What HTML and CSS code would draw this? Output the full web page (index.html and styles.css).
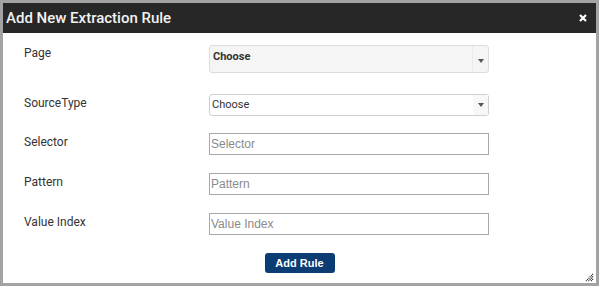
FILE: index.html
```html
<!DOCTYPE html>
<html lang="en">

<head>
    <meta charset="UTF-8">
    <title>Add New Extraction Rule</title>
    <link rel="stylesheet" href="styles.css">
</head>

<body>
    <!-- dialog window -->
    <div class="dialog">
        <div class="dialog-header">
            <span class="dialog-title">Add New Extraction Rule</span>
            <svg class="close-icon" width="8" height="8" viewBox="0 0 8 8">
                <path d="M1 1 L7 7 M7 1 L1 7" stroke="#fff" stroke-width="2.2" />
            </svg>
        </div>

        <div class="dialog-body">
            <div class="form-row row-page">
                <label class="form-label">Page</label>
                <div class="select select-page">
                    <span class="select-text">Choose</span>
                    <span class="select-arrow"><i class="caret"></i></span>
                </div>
            </div>
            <div class="form-row row-source">
                <label class="form-label">SourceType</label>
                <div class="select select-source">
                    <span class="select-text">Choose</span>
                    <span class="select-arrow"><i class="caret"></i></span>
                </div>
            </div>
            <div class="form-row">
                <label class="form-label">Selector</label>
                <input class="text-input" type="text" placeholder="Selector">
            </div>
            <div class="form-row">
                <label class="form-label">Pattern</label>
                <input class="text-input" type="text" placeholder="Pattern">
            </div>
            <div class="form-row">
                <label class="form-label">Value Index</label>
                <input class="text-input" type="text" placeholder="Value Index">
            </div>
            <div class="button-row">
                <button class="add-btn">Add Rule</button>
            </div>
        </div>

        <!-- resize grip -->
        <svg class="resize-grip" width="9" height="9" viewBox="0 0 9 9">
            <path d="M8 1 L1 8 M8 3.5 L3.5 8 M8 6 L6 8" stroke="#222" stroke-width="1.2" stroke-dasharray="1 0.8" />
        </svg>
    </div>
</body>

</html>
```

FILE: styles.css
```css
/* page and window frame */
body {
    margin: 0;
    height: 286px;
    padding: 3px 3px 3px 3px;
    box-sizing: border-box;
    background-color: #a3a3a3;
    font-family: Roboto, "Liberation Sans", Arial, sans-serif;
}

.dialog {
    position: relative;
    height: 100%;
    background-color: #fff;
    display: flex;
    flex-direction: column;
}

/* header bar */
.dialog-header {
    height: 30px;
    background-color: #272727;
    display: flex;
    align-items: center;
    justify-content: space-between;
    padding: 0 9px 0 3px;
}

.dialog-title {
    color: #f2f2f2;
    font-size: 15px;
    font-weight: 500;
    margin-top: -1px;
}

.close-icon {
    margin-top: -1px;
}

/* form */
.dialog-body {
    padding: 12px 0 0 21px;
}

.form-row {
    display: flex;
    align-items: flex-start;
    margin-bottom: 18px;
}

.row-page {
    margin-bottom: 21px;
}

.row-source {
    margin-bottom: 17px;
}

.form-label {
    width: 185px;
    font-size: 12px;
    color: #333;
    line-height: 16px;
    padding-top: 1px;
}

.row-page .form-label {
    padding-top: 0;
}

.select {
    width: 280px;
    box-sizing: border-box;
    display: flex;
    border: 1px solid #ddd;
    border-radius: 3px;
    color: #333;
}

.select-page {
    height: 28px;
    background-color: #f5f5f5;
    font-weight: bold;
    font-size: 11px;
}

.select-page .select-text {
    padding: 4px 0 0 3px;
}

.select-source {
    height: 22px;
    background-color: #fff;
    border-color: #d0d0d0;
    font-size: 11px;
}

.select-source .select-text {
    padding: 3px 0 0 2px;
}

.select-text {
    flex: 1;
}

.select-arrow {
    width: 15px;
    display: flex;
    align-items: center;
    justify-content: center;
}

.select-page .select-arrow {
    border-left: 1px solid #eaeaea;
    padding-top: 3px;
}

.select-source .select-arrow {
    background-color: #f7f7f7;
}

.caret {
    width: 0;
    height: 0;
    border-left: 3.5px solid transparent;
    border-right: 3.5px solid transparent;
    border-top: 4px solid #555;
}

.text-input {
    width: 280px;
    height: 22px;
    box-sizing: border-box;
    margin: 0;
    border: 1px solid #a9a9a9;
    padding: 0 1px;
    font-family: "Liberation Sans", Arial, sans-serif;
    font-size: 12px;
    color: #333;
}

.text-input::placeholder {
    color: #8a8a8a;
}

/* submit button */
.button-row {
    display: flex;
    justify-content: center;
    margin-left: -21px;
}

.add-btn {
    width: 70px;
    height: 20px;
    padding: 0;
    border: none;
    border-radius: 3px;
    background-color: #0b3d74;
    color: #fff;
    font-family: "Liberation Sans", Arial, sans-serif;
    font-weight: bold;
    font-size: 11px;
}

.resize-grip {
    position: absolute;
    right: 2px;
    bottom: 1px;
}
```
